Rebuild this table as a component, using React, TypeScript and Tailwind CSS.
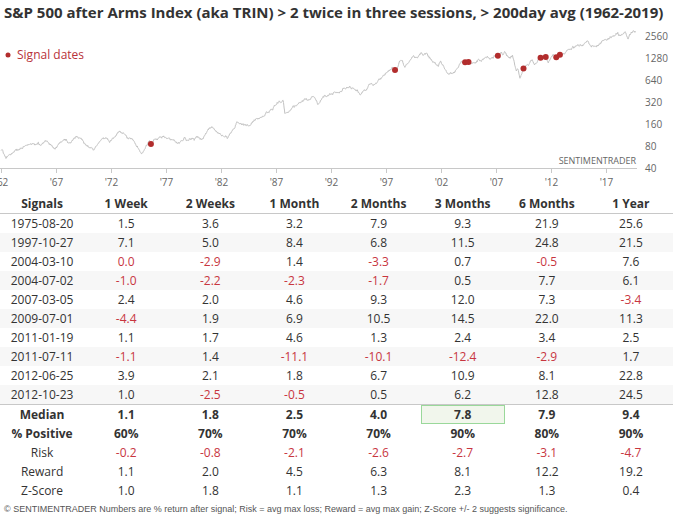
import React from "react";

// rough S&P 500 path: [year, price]
const anchors: [number, number][] = [
  [1962.0, 70], [1962.1, 71], [1962.45, 54], [1962.6, 58], [1962.9, 62], [1963.5, 70], [1964.0, 76],
  [1965.0, 86], [1965.4, 90], [1965.45, 84], [1966.05, 94], [1966.8, 74], [1967.7, 96], [1968.2, 88],
  [1968.9, 108], [1969.5, 92], [1970.4, 70], [1971.3, 104], [1971.9, 92], [1973.0, 120], [1973.7, 104],
  [1974.0, 98], [1974.75, 63], [1974.95, 68], [1975.5, 95], [1975.63, 85], [1976.0, 100], [1976.7, 107],
  [1977.5, 98], [1978.2, 87], [1978.7, 106], [1978.85, 94], [1979.8, 108], [1980.2, 100], [1980.25, 98],
  [1980.9, 140], [1981.5, 130], [1982.6, 102], [1983.5, 170], [1984.5, 150], [1985.5, 190], [1986.5, 250],
  [1987.65, 336], [1987.8, 224], [1988.5, 270], [1989.6, 355], [1990.0, 340], [1990.5, 368], [1990.8, 295],
  [1991.3, 380], [1992.0, 415], [1993.0, 450], [1994.1, 480], [1994.9, 450], [1995.5, 560], [1996.5, 670],
  [1997.6, 950], [1997.82, 876], [1998.5, 1180], [1998.7, 960], [1999.5, 1380], [1999.8, 1300],
  [2000.2, 1520], [2000.7, 1500], [2001.2, 1150], [2001.7, 1000], [2002.0, 1150], [2002.55, 800],
  [2002.8, 776], [2003.2, 800], [2004.0, 1130], [2004.19, 1123], [2004.5, 1125], [2004.6, 1065],
  [2005.5, 1200], [2006.3, 1300], [2006.45, 1230], [2007.1, 1450], [2007.17, 1374], [2007.5, 1540],
  [2007.65, 1420], [2007.8, 1565], [2008.2, 1280], [2008.5, 1400], [2008.85, 850], [2009.0, 900],
  [2009.18, 676], [2009.5, 923], [2010.3, 1210], [2010.5, 1030], [2011.05, 1295], [2011.3, 1360],
  [2011.52, 1320], [2011.75, 1099], [2012.25, 1410], [2012.42, 1280], [2012.48, 1313], [2012.72, 1460],
  [2012.81, 1413], [2012.9, 1380], [2013.5, 1650], [2014.0, 1840], [2014.8, 1880], [2015.4, 2130],
  [2015.65, 1870], [2016.1, 1829], [2016.6, 2170], [2017.5, 2440], [2018.07, 2870], [2018.15, 2600],
  [2018.75, 2930], [2018.98, 2350], [2019.3, 2900], [2019.55, 2980], [2019.7, 2950],
];

const signals: [number, number][] = [
  [1975.63, 85], [1997.82, 876], [2004.19, 1123], [2004.5, 1125], [2007.17, 1374],
  [2009.5, 923], [2011.05, 1295], [2011.52, 1320], [2012.48, 1313], [2012.81, 1413],
];

const sx = (t: number) => 1 + (t - 1962) * 11;
const sy = (p: number) => 168 - 22 * Math.log2(p / 40);

function rng(seed: number) {
  return () => {
    seed |= 0;
    seed = (seed + 0x6d2b79f5) | 0;
    let t = Math.imul(seed ^ (seed >>> 15), 1 | seed);
    t = (t + Math.imul(t ^ (t >>> 7), 61 | t)) ^ t;
    return ((t ^ (t >>> 14)) >>> 0) / 4294967296;
  };
}

function buildPath() {
  const r = rng(42);
  const g = () => (r() + r() + r() - 1.5) * 1.4;
  let d = "";
  for (let k = 0; k < anchors.length - 1; k++) {
    const [t0, p0] = anchors[k];
    const [t1, p1] = anchors[k + 1];
    const n = Math.max(1, Math.round((t1 - t0) / 0.03));
    const w = [0];
    for (let i = 1; i <= n; i++) w.push(w[i - 1] + g() * 0.03);
    const l0 = Math.log2(p0);
    const l1 = Math.log2(p1);
    for (let i = k === 0 ? 0 : 1; i <= n; i++) {
      const f = i / n;
      const jit = i === 0 || i === n ? 0 : g() * 0.012;
      const v = l0 + (l1 - l0) * f + (w[i] - f * w[n]) + jit;
      const x = sx(t0 + (t1 - t0) * f);
      const y = sy(Math.pow(2, v));
      d += (d ? "L" : "M") + x.toFixed(2) + " " + y.toFixed(2);
    }
  }
  return d;
}

const linePath = buildPath();

const xTicks = ["'62", "'67", "'72", "'77", "'82", "'87", "'92", "'97", "'02", "'07", "'12", "'17"];
const yTicks = [2560, 1280, 640, 320, 160, 80, 40];

type Row = { label: string; vals: string[] };

const rows: Row[] = [
  { label: "1975-08-20", vals: ["1.5", "3.6", "3.2", "7.9", "9.3", "21.9", "25.6"] },
  { label: "1997-10-27", vals: ["7.1", "5.0", "8.4", "6.8", "11.5", "24.8", "21.5"] },
  { label: "2004-03-10", vals: ["0.0", "-2.9", "1.4", "-3.3", "0.7", "-0.5", "7.6"] },
  { label: "2004-07-02", vals: ["-1.0", "-2.2", "-2.3", "-1.7", "0.5", "7.7", "6.1"] },
  { label: "2007-03-05", vals: ["2.4", "2.0", "4.6", "9.3", "12.0", "7.3", "-3.4"] },
  { label: "2009-07-01", vals: ["-4.4", "1.9", "6.9", "10.5", "14.5", "22.0", "11.3"] },
  { label: "2011-01-19", vals: ["1.1", "1.7", "4.6", "1.3", "2.4", "3.4", "2.5"] },
  { label: "2011-07-11", vals: ["-1.1", "1.4", "-11.1", "-10.1", "-12.4", "-2.9", "1.7"] },
  { label: "2012-06-25", vals: ["3.9", "2.1", "1.8", "6.7", "10.9", "8.1", "22.8"] },
  { label: "2012-10-23", vals: ["1.0", "-2.5", "-0.5", "0.5", "6.2", "12.8", "24.5"] },
];

const summary: (Row & { bold?: boolean })[] = [
  { label: "Median", vals: ["1.1", "1.8", "2.5", "4.0", "7.8", "7.9", "9.4"], bold: true },
  { label: "% Positive", vals: ["60%", "70%", "70%", "70%", "90%", "80%", "90%"], bold: true },
  { label: "Risk", vals: ["-0.2", "-0.8", "-2.1", "-2.6", "-2.7", "-3.1", "-4.7"] },
  { label: "Reward", vals: ["1.1", "2.0", "4.5", "6.3", "8.1", "12.2", "19.2"] },
  { label: "Z-Score", vals: ["1.0", "1.8", "1.1", "1.3", "2.3", "1.3", "0.4"] },
];

const heads = ["Signals", "1 Week", "2 Weeks", "1 Month", "2 Months", "3 Months", "6 Months", "1 Year"];

const isNeg = (v: string) => v.startsWith("-") || v === "0.0";

function Chart() {
  return (
    <svg width={673} height={171} viewBox="0 24 673 171" className="block">
      <text x={17} y={59} fontSize={12} fill="#b8323a">Signal dates</text>
      <circle cx={8} cy={55} r={2.5} fill="#b22d2d" />
      <line x1={0} y1={168.5} x2={637} y2={168.5} stroke="#c8c8c8" />
      {xTicks.map((l, i) => (
        <g key={l}>
          <line x1={1.5 + i * 55} y1={168} x2={1.5 + i * 55} y2={173} stroke="#c8c8c8" />
          <text x={1.5 + i * 55} y={186} fontSize={10} fill="#666" textAnchor="middle">{l}</text>
        </g>
      ))}
      {yTicks.map((v) => (
        <text key={v} x={645} y={sy(v) + 4} fontSize={10} fill="#666">{v}</text>
      ))}
      <text x={636} y={164} fontSize={9} fill="#666" textAnchor="end">SENTIMENTRADER</text>
      <path d={linePath} fill="none" stroke="#c2c2c2" strokeWidth={1} />
      {signals.map(([t, p]) => (
        <circle key={t} cx={sx(t)} cy={sy(p)} r={3} fill="#b22d2d" />
      ))}
    </svg>
  );
}

export default function App() {
  return (
    <div className="w-[673px] h-[518px] bg-white overflow-hidden font-['Open_Sans',sans-serif] text-[#333]">
      <div className="h-[24px] pl-[4px] text-[15px] leading-[24px] font-bold whitespace-nowrap">
        S&amp;P 500 after Arms Index (aka TRIN) &gt; 2 twice in three sessions, &gt; 200day avg (1962-2019)
      </div>
      <Chart />
      <table className="w-full table-fixed border-collapse text-[12px]">
        <thead>
          <tr className="h-[18px] border-b border-[#c8c8c8]">
            {heads.map((h) => (
              <th key={h} className="p-0 font-bold text-center leading-[18px]">{h}</th>
            ))}
          </tr>
        </thead>
        <tbody>
          {rows.map((r, i) => (
            <tr
              key={r.label}
              className={`h-[19px] ${i % 2 === 1 ? "bg-[#f7f7f7]" : ""} ${i === rows.length - 1 ? "border-b border-[#c8c8c8]" : ""}`}
            >
              <td className="p-0 text-center leading-[19px]">{r.label}</td>
              {r.vals.map((v, j) => (
                <td key={j} className={`p-0 text-center leading-[19px] ${isNeg(v) ? "text-[#c8363f]" : ""}`}>{v}</td>
              ))}
            </tr>
          ))}
          {summary.map((r, i) => (
            <tr key={r.label} className={`h-[19px] ${r.bold ? "font-bold" : ""}`}>
              <td className="p-0 text-center leading-[19px]">{r.label}</td>
              {r.vals.map((v, j) => (
                <td
                  key={j}
                  className={`p-0 text-center leading-[19px] ${isNeg(v) ? "text-[#c8363f]" : ""} ${
                    i === 0 && j === 4 ? "bg-[#f1f6ec] shadow-[inset_0_0_0_1px_#9ad89a]" : ""
                  }`}
                >
                  {v}
                </td>
              ))}
            </tr>
          ))}
        </tbody>
      </table>
      <div className="pl-[4px] pt-[1px] text-[9px] leading-[17px] text-[#555] font-['Liberation_Sans',sans-serif] whitespace-nowrap">
        © SENTIMENTRADER Numbers are % return after signal; Risk = avg max loss; Reward = avg max gain; Z-Score +/- 2 suggests significance.
      </div>
    </div>
  );
}
